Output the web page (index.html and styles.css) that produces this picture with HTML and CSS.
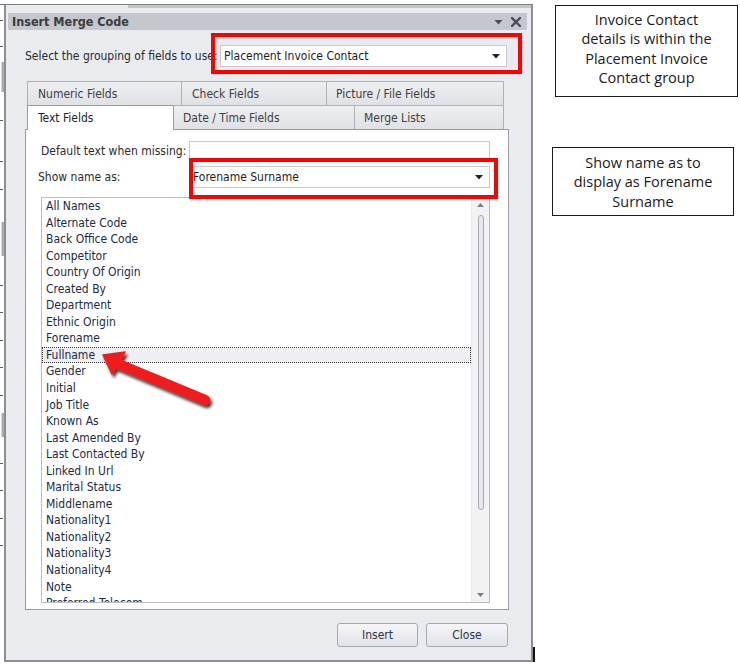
FILE: index.html
```html
<!DOCTYPE html>
<html lang="en">
<head>
<meta charset="utf-8">
<title>Insert Merge Code</title>
<link rel="stylesheet" href="styles.css">
</head>
<body>
<div class="page">
  <div class="ruler">
    <svg width="4" height="666" viewBox="0 0 4 666">
      <rect x="0" y="4" width="4" height="1" fill="#6b6e73"/>
      <rect x="1.5" y="62" width="2.5" height="30" fill="#a9abaf"/>
      <rect x="1.5" y="222" width="2.5" height="34" fill="#a9abaf"/>
      <rect x="1.5" y="413" width="2.5" height="24" fill="#a9abaf"/>
      <g fill="#55585c">
        <rect x="0" y="20" width="3" height="1"/>
        <rect x="0" y="46" width="3" height="1"/>
        <rect x="0" y="120" width="3" height="1"/>
        <rect x="0" y="161" width="3" height="1"/>
        <rect x="0" y="189" width="3" height="1"/>
        <rect x="0" y="285" width="3" height="1"/>
        <rect x="0" y="312" width="3" height="1"/>
        <rect x="0" y="340" width="3" height="1"/>
        <rect x="0" y="367" width="3" height="1"/>
        <rect x="0" y="395" width="3" height="1"/>
        <rect x="0" y="463" width="3" height="1"/>
        <rect x="0" y="490" width="3" height="1"/>
        <rect x="0" y="518" width="3" height="1"/>
        <rect x="0" y="545" width="3" height="1"/>
      </g>
    </svg>
  </div>

  <div class="dialog">
    <div class="frame-top"></div>
    <div class="titlebar">
      <span class="title">Insert Merge Code</span>
      <span class="tb-icons">
        <svg width="9" height="6" viewBox="0 0 9 6"><path d="M0.5 1 L8.5 1 L4.5 5.5 Z" fill="#4a4d52"/></svg>
        <svg width="10" height="10" viewBox="0 0 10 10"><path d="M1 1 L9 9 M9 1 L1 9" stroke="#4a4d52" stroke-width="2.4" stroke-linecap="square"/></svg>
      </span>
    </div>

    <div class="group-row">
      <span class="group-label">Select the grouping of fields to use:</span>
      <div class="combo combo-group">
        <span>Placement Invoice Contact</span>
        <svg class="caret" width="8" height="5" viewBox="0 0 8 5"><path d="M0 0 L8 0 L4 4.5 Z" fill="#222"/></svg>
      </div>
    </div>

    <div class="tabs">
      <div class="tab-row">
        <div class="tab t-numeric">Numeric Fields</div>
        <div class="tab t-check">Check Fields</div>
        <div class="tab t-picture">Picture / File Fields</div>
      </div>
      <div class="tab-row">
        <div class="tab t-text active">Text Fields</div>
        <div class="tab t-date">Date / Time Fields</div>
        <div class="tab t-merge">Merge Lists</div>
      </div>
    </div>

    <div class="panel">
      <div class="field-row row-default">
        <span class="field-label">Default text when missing:</span>
        <div class="textbox"></div>
      </div>
      <div class="field-row row-show">
        <span class="field-label label-show">Show name as:</span>
        <div class="combo combo-show">
          <span>Forename Surname</span>
          <svg class="caret" width="8" height="5" viewBox="0 0 8 5"><path d="M0 0 L8 0 L4 4.5 Z" fill="#222"/></svg>
        </div>
      </div>

      <div class="listbox">
        <ul class="items">
          <li>All Names</li>
          <li>Alternate Code</li>
          <li>Back Office Code</li>
          <li>Competitor</li>
          <li>Country Of Origin</li>
          <li>Created By</li>
          <li>Department</li>
          <li>Ethnic Origin</li>
          <li>Forename</li>
          <li class="selected">Fullname</li>
          <li>Gender</li>
          <li>Initial</li>
          <li>Job Title</li>
          <li>Known As</li>
          <li>Last Amended By</li>
          <li>Last Contacted By</li>
          <li>Linked In Url</li>
          <li>Marital Status</li>
          <li>Middlename</li>
          <li>Nationality1</li>
          <li>Nationality2</li>
          <li>Nationality3</li>
          <li>Nationality4</li>
          <li>Note</li>
          <li>Preferred Telecom</li>
        </ul>
        <div class="scrollbar">
          <svg class="sb-arrow" width="7" height="4" viewBox="0 0 7 4"><path d="M0 4 L7 4 L3.5 0 Z" fill="#7a7d83"/></svg>
          <div class="sb-track"><div class="sb-thumb"></div></div>
          <svg class="sb-arrow" width="7" height="4" viewBox="0 0 7 4"><path d="M0 0 L7 0 L3.5 4 Z" fill="#7a7d83"/></svg>
        </div>
      </div>
    </div>

    <div class="buttons">
      <button class="btn">Insert</button>
      <button class="btn">Close</button>
    </div>
  </div>

  <div class="notes">
    <div class="note note-1">Invoice Contact<br>details is within the<br>Placement Invoice<br>Contact group</div>
    <div class="note note-2">Show name as to<br>display as Forename<br>Surname</div>
  </div>

  <div class="highlight hl-group"></div>
  <div class="highlight hl-show"></div>
  <div class="edge-mark"></div>

  <svg class="arrow" width="740" height="666" viewBox="0 0 740 666">
    <defs>
      <filter id="shadow" x="-20%" y="-20%" width="140%" height="140%">
        <feDropShadow dx="2" dy="3" stdDeviation="1.8" flood-color="#000" flood-opacity="0.75"/>
      </filter>
    </defs>
    <g filter="url(#shadow)">
      <line x1="116" y1="363" x2="205" y2="400" stroke="#f01c1c" stroke-width="10.5" stroke-linecap="round"/>
      <path d="M103 355 L125 352 L112 374 Z" fill="#f01c1c" stroke="#f01c1c" stroke-width="1.5" stroke-linejoin="round"/>
    </g>
  </svg>
</div>
</body>
</html>
```

FILE: styles.css
```css
html, body {
  margin: 0;
  padding: 0;
  background: #ffffff;
}

body {
  font-family: "DejaVu Sans Condensed", "Liberation Sans", Arial, sans-serif;
  font-size: 12px;
  color: #2b2b2b;
}

.page {
  position: relative;
  width: 740px;
  height: 666px;
  display: flex;
  align-items: flex-start;
  overflow: hidden;
}

.ruler {
  width: 4px;
  height: 666px;
  flex: none;
}
.ruler svg { display: block; }

/* ---------- dialog ---------- */
.dialog {
  flex: none;
  margin-top: 4px;
  width: 529px;
  height: 658px;
  box-sizing: border-box;
  border-top: 1px solid #7b7e84;
  border-left: 2px solid #8b8e94;
  border-right: 2px solid #8b8e94;
  border-bottom: 2px solid #8b8e94;
  background: #eaebee;
  display: flex;
  flex-direction: column;
}

.frame-top {
  height: 3px;
  margin-left: 122px;
  background: #c1c4c9;
}

.titlebar {
  margin: 5px 4px 0 2px;
  height: 17px;
  background: #c4c7cd;
  display: flex;
  align-items: center;
  justify-content: space-between;
  padding: 0 6px 0 4px;
}
.title {
  font-weight: bold;
  font-size: 12.5px;
  color: #3a3b3d;
}
.tb-icons {
  display: flex;
  align-items: center;
  gap: 8px;
}
.tb-icons svg { display: block; }

.group-row {
  margin-top: 15px;
  padding-left: 19px;
  height: 22px;
  display: flex;
  align-items: center;
}
.group-label {
  width: 195px;
  flex: none;
  white-space: nowrap;
  color: #2b2b2b;
}

.combo {
  box-sizing: border-box;
  height: 22px;
  background: #ffffff;
  border: 1px solid #c6c9ce;
  display: flex;
  align-items: center;
  justify-content: space-between;
  color: #1e1e1e;
  white-space: nowrap;
}
.combo-group {
  width: 287px;
  padding: 0 6px 0 3px;
}
.caret { display: block; }

/* ---------- tabs ---------- */
.tabs {
  margin-top: 14px;
  margin-left: 21px;
  width: 477px;
}
.tab-row {
  display: flex;
  height: 24px;
}
.tab {
  box-sizing: border-box;
  height: 24px;
  border: 1px solid #aeb1b7;
  border-bottom: none;
  margin-left: -1px;
  background: linear-gradient(#eeeff1, #e0e1e5);
  color: #3d3f42;
  display: flex;
  align-items: center;
  padding-left: 10px;
  white-space: nowrap;
}
.tab:first-child { margin-left: 0; }
.t-numeric { width: 155px; }
.t-check { width: 146px; }
.t-picture { width: 178px; padding-left: 9px; }
.t-text { width: 147px; }
.t-date { width: 182px; padding-left: 9px; }
.t-merge { width: 150px; padding-left: 9px; }
.tab.active {
  background: #ffffff;
  border-color: #989ba1;
  color: #1e2530;
  height: 25px;
  position: relative;
  z-index: 1;
}

/* ---------- panel ---------- */
.panel {
  margin-left: 19px;
  width: 484px;
  height: 481px;
  box-sizing: border-box;
  border: 1px solid #989ba1;
  background: #ffffff;
  display: flex;
  flex-direction: column;
}

.field-row {
  display: flex;
  align-items: center;
}
.row-default {
  margin-top: 11px;
  height: 19px;
}
.row-show {
  margin-top: 6px;
  height: 22px;
}
.field-label {
  width: 163px;
  flex: none;
  box-sizing: border-box;
  padding-left: 15px;
  white-space: nowrap;
  color: #2b2b2b;
}
.label-show { padding-left: 12px; }

.textbox {
  box-sizing: border-box;
  width: 301px;
  height: 19px;
  border: 1px solid #c6c9ce;
  background: #ffffff;
}
.combo-show {
  width: 301px;
  padding: 0 6px 0 3px;
}

.listbox {
  margin-top: 9px;
  margin-left: 15px;
  width: 449px;
  height: 406px;
  box-sizing: border-box;
  border: 1px solid #b8bbc1;
  display: flex;
  overflow: hidden;
}
.items {
  list-style: none;
  margin: 0;
  padding: 0;
  flex: 1;
  overflow: hidden;
  color: #1d2b45;
}
.items li {
  box-sizing: border-box;
  height: 16.56px;
  line-height: 16.56px;
  padding-left: 3px;
  border: 1px solid transparent;
  border-width: 0 1px;
  white-space: nowrap;
}
.items li.selected {
  border: 1px dotted #3a3a3a;
  background: #eeeff2;
  line-height: 14.56px;
}

.scrollbar {
  width: 17px;
  flex: none;
  background: #f2f2f4;
  border-left: 1px solid #e8e9ec;
  display: flex;
  flex-direction: column;
  align-items: center;
}
.sb-arrow {
  display: block;
  flex: none;
}
.scrollbar .sb-arrow:first-child { margin-top: 5px; }
.scrollbar .sb-arrow:last-child { margin-bottom: 5px; }
.sb-track {
  flex: 1;
  width: 100%;
  display: flex;
  justify-content: center;
}
.sb-thumb {
  margin-top: 8px;
  width: 6px;
  height: 295px;
  box-sizing: border-box;
  border: 1px solid #a7aab0;
  border-radius: 3px;
  background: #e7e8eb;
}

/* ---------- buttons ---------- */
.buttons {
  margin-top: 13px;
  padding-right: 23px;
  display: flex;
  justify-content: flex-end;
  gap: 8px;
}
.btn {
  box-sizing: border-box;
  width: 82px;
  height: 24px;
  border: 1px solid #a5a8ae;
  border-radius: 3px;
  background: linear-gradient(#f6f6f8, #e2e3e7);
  font-family: inherit;
  font-size: 12px;
  color: #2a3548;
  padding: 0;
}
.btn:first-child { width: 81px; }

/* ---------- annotations ---------- */
.notes {
  flex: none;
  margin-left: 22px;
  padding-top: 5px;
  display: flex;
  flex-direction: column;
}
.note {
  box-sizing: border-box;
  border: 1px solid #1a1a1a;
  font-family: "Open Sans", "Lato", sans-serif;
  font-size: 14.5px;
  line-height: 19.4px;
  text-align: center;
  color: #1b1b1b;
  white-space: nowrap;
}
.note-1 {
  width: 183px;
  height: 92px;
  padding-top: 4px;
}
.note-2 {
  margin-top: 50px;
  margin-left: -3px;
  width: 182px;
  height: 69px;
  padding-top: 5px;
}

/* ---------- overlays ---------- */
.highlight {
  position: absolute;
  box-sizing: border-box;
  border: 4px solid #ff0000;
  pointer-events: none;
}
.hl-group {
  left: 211px;
  top: 33px;
  width: 311px;
  height: 41px;
}
.hl-show {
  left: 189px;
  top: 158px;
  width: 309px;
  height: 41px;
}
.edge-mark {
  position: absolute;
  left: 533px;
  top: 647px;
  width: 2px;
  height: 15px;
  background: #111;
}
.arrow {
  position: absolute;
  left: 0;
  top: 0;
  pointer-events: none;
}
```
